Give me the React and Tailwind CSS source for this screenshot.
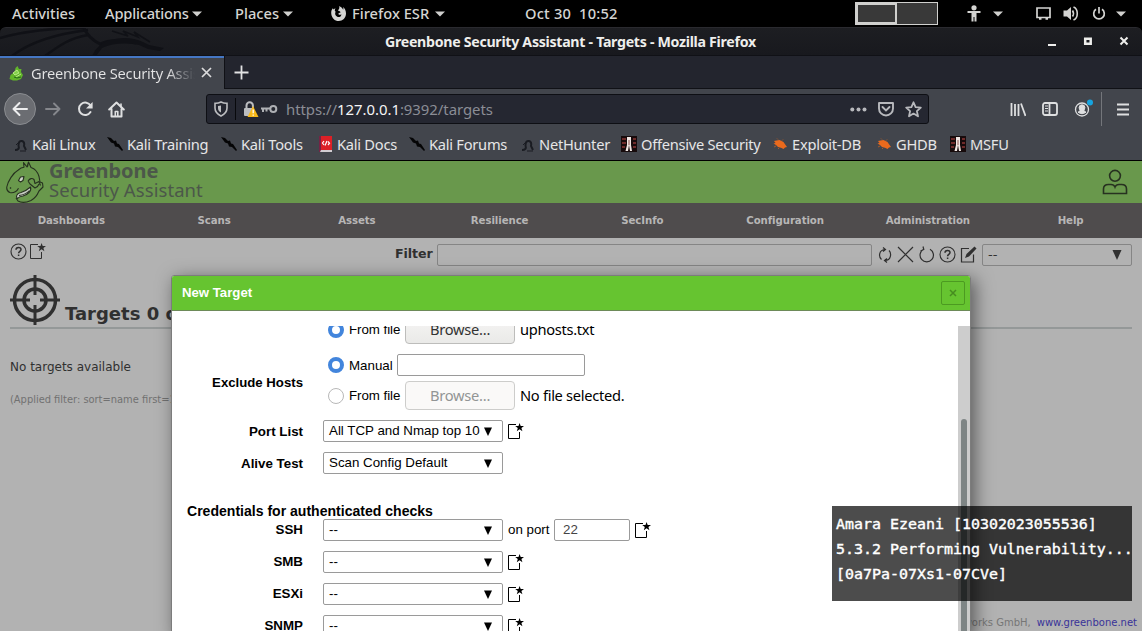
import React from "react";

const Caret = () => (
  <svg width="12" height="6" viewBox="0 0 12 6" fill="#d0d0ce"><path d="M1 0.5h10L6 5.5z" /></svg>
);

const NewIcon = ({ color = "#000" }) => (
  <svg width="16" height="16" viewBox="0 0 16 16" className="shrink-0">
    <path d="M8 1.500H.5v14H11.500V9" fill="none" stroke={color} strokeWidth="1" />
    <path d="M11.600 0l1.100 3h3.300l-2.600 2 1 3.200-2.800-1.900L8.800 8.200l1-3.200L7.200 3h3.300z" fill={color} />
  </svg>
);

const HelpIcon = () => (
  <svg width="17" height="17" viewBox="0 0 17 17" fill="none" stroke="#303030" className="shrink-0">
    <circle cx="8.500" cy="8.500" r="7.500" strokeWidth="1.100" />
    <path d="M6 6.700c0-3 5-3 5-.2 0 1.900-2.400 1.800-2.400 3.700M8.600 11.500v1.600" strokeWidth="1.500" />
  </svg>
);

function MenuBar() {
  return (
    <div className="flex h-[27px] shrink-0 items-center bg-black pl-3 text-[14.670px] font-medium text-[#d4d4d2]">
      <span className="w-[93px] pb-[2px]">Activities</span>
      <span className="w-[86px] pb-[2px] tracking-[-0.2px]">Applications</span>
      <span className="w-11"><Caret /></span>
      <span className="w-[47px] pb-[2px]">Places</span>
      <span className="w-[49px]"><Caret /></span>
      <svg width="15" height="15" viewBox="0 0 16 16" className="mr-[6px]">
        <path d="M2 2.500C.5 4 0 6 .3 8.400.9 12.800 4 16 8.200 16c4.300 0 7.800-3.300 7.800-8 0-3-1.300-5.600-3-7C13.500 3 13 4 13 4 11.500 1.200 9.500.5 8.500 0c1.200 2.500-.5 3.600-1 5 2 .3 2.800 1 2.600 2-1 .3-2 .6-2.200 1.300 0 1.300 2 1.500 3.200.4C11 11.500 8.500 12.300 6.700 11.400 4.400 10.300 3.800 7.800 5 6 3.500 5.200 4 3.500 4.800 2.600 3.700 2.600 3 3.300 2.700 3.700z" fill="#d4d4d2" />
      </svg>
      <span className="w-[82px] pb-[2px]">Firefox ESR</span>
      <span className="w-[91px]"><Caret /></span>
      <span className="w-[330px] whitespace-pre pb-[2px] tracking-[0.200px]">Oct 30  10:52</span>
      <div className="flex h-[23px] w-[83px] border border-[#d0d0ce] bg-[#393939]">
        <div className="w-[41px] border-2 border-[#d0d0ce]" />
      </div>
      <svg width="14" height="17" viewBox="0 0 14 17" className="ml-[29px]" fill="#d4d4d2">
        <circle cx="7" cy="2.800" r="2.600" /><path d="M.5 6h13v2H9.500v8.500h-2V12h-1v4.500h-2V8H.5z" />
      </svg>
      <span className="ml-[11px] w-11"><Caret /></span>
      <svg width="15" height="13" viewBox="0 0 15 13" fill="none" stroke="#d4d4d2" strokeWidth="1.700"><path d="M1 1h13v9.500H1zM3 12h2.500M9.500 12H12" /></svg>
      <svg width="17" height="15" viewBox="0 0 17 15" className="ml-[12px]" fill="#d4d4d2">
        <path d="M0.500 4.500h3.500L8 1v13L4 10.500H0.500z" />
        <path d="M9.500 4.500q2 3 0 6M10.500 1c5 2 5 11 0 13" fill="none" stroke="#d4d4d2" strokeWidth="1.600" />
      </svg>
      <svg width="14" height="14" viewBox="0 0 14 14" className="ml-3" fill="none" stroke="#d4d4d2" strokeWidth="1.700"><path d="M7 0v6.500M4 2.300a5.300 5.300 0 1 0 6 0" /></svg>
      <span className="ml-[9px]"><Caret /></span>
    </div>
  );
}

function TitleBar() {
  return (
    <div className="flex h-7 shrink-0 items-center overflow-hidden rounded-t-md border-t border-[#2a2a2f] bg-gradient-to-b from-[#1d1e22] to-[#18191e]">
      <svg width="385" height="28" viewBox="0 0 385 28" fill="none" stroke="#101116" className="shrink-0">
        <path d="M0 10C25 3 55 0 84 0M12 28C30 14 55 6 88 2M45 28C60 17 70 10 88 7" strokeWidth="2.500" />
        <path d="M84 0Q88 10 100 16Q112 10 136 15" strokeWidth="3" />
        <path d="M92 28Q98 15 110 12Q128 7 143 14L149 17 164 20 160 23 148 21 139 17Q118 13 102 20L96 28z" fill="#101116" stroke="none" />
        <path d="M112 3L128 8 123 3 138 9 134 4 150 14" strokeWidth="1.500" />
      </svg>
      <span className="w-[660px] shrink-0 text-[14.200px] font-bold tracking-[-0.300px] text-[#eeeeec]">Greenbone Security Assistant - Targets - Mozilla Firefox</span>
      <svg width="82" height="12" viewBox="0 0 82 12" className="ml-[2px] shrink-0" fill="none" stroke="#eeeeec" strokeWidth="2">
        <path d="M1 9h8M73.500 1.500l7 7M80.500 1.500l-7 7" /><path d="M38.200 2.700h5.500v5h-5.500z" strokeWidth="2.500" />
      </svg>
    </div>
  );
}

function Tabs() {
  return (
    <div className="flex h-[34px] shrink-0 border-t border-[#101116] bg-[#23252e]">
      <div className="flex w-[224px] items-center border-t-2 border-[#4577c4] bg-[#42454c] pb-[2px] pl-[9px]">
        <svg width="16" height="16" viewBox="0 0 16 16">
          <path d="M0.500 14l1-4 4-3 1-4 2-2 1.500 3 2.500 0-.5 3 2 3-2 4-4 1.500H4z" fill="#62b52b" />
          <path d="M4 8l4-3 2 3-4 2zM7 12l5-3" stroke="#b8e986" fill="#83d14b" /><path d="M5 12l3 1 4-1" stroke="#246918" fill="none" />
        </svg>
        <span className="ml-[6px] w-[164px] overflow-hidden whitespace-nowrap bg-gradient-to-r from-[#e4e4e5] from-[83%] to-transparent to-100% bg-clip-text text-[14.670px] tracking-[-0.230px] text-transparent">Greenbone Security Assistant</span>
        <svg width="11" height="11" viewBox="0 0 11 11" className="ml-[6px]" stroke="#dcdcdd" strokeWidth="1.700"><path d="M1 1l9 9M10 1l-9 9" /></svg>
      </div>
      <div className="flex flex-1 items-center border-b border-l border-[#101116] pl-[9px]">
        <svg width="15" height="15" viewBox="0 0 15 15" stroke="#e2e2e3" strokeWidth="1.800"><path d="M7.500 0.500v14M.5 7.500h14" /></svg>
      </div>
    </div>
  );
}

function NavBar() {
  return (
    <div className="flex h-10 shrink-0 items-center bg-[#42454c] pl-1">
      <div className="flex h-8 w-8 items-center justify-center rounded-full border border-[#8a8c90] bg-[#6b6d72]">
        <svg width="16" height="16" viewBox="0 0 16 16" fill="none" stroke="#ededee" strokeWidth="2" strokeLinecap="round" strokeLinejoin="round"><path d="M15 8H1.500M7.500 2l-6 6 6 6" /></svg>
      </div>
      <svg width="16" height="16" viewBox="0 0 16 16" className="ml-[9px]" fill="none" stroke="#85878c" strokeWidth="1.900" strokeLinecap="round" strokeLinejoin="round"><path d="M1 8h13.500M9 2.500L14.500 8 9 13.500" /></svg>
      <svg width="16" height="16" viewBox="0 0 16 16" className="ml-4" fill="none" stroke="#dedfe0" strokeWidth="2"><path d="M13.600 4.700A6.200 6.200 0 1 0 13.500 11" strokeLinecap="round" /><path d="M15.600 1v6.600H9z" fill="#dedfe0" stroke="none" /></svg>
      <svg width="17" height="17" viewBox="0 0 17 17" className="ml-[15px]" fill="none" stroke="#dedfe0" strokeWidth="2" strokeLinecap="round" strokeLinejoin="round"><path d="M1.200 8.500L8.500 1.500 15.800 8.500M3.500 8v7.500h10V8" /><path d="M7.300 15V10.500h2.500V15M13 3v3" strokeWidth="1.600" /></svg>
      <div className="ml-[81px] flex h-[30px] w-[723px] items-center rounded-[3px] border border-[#0e0f14] bg-[#252731]">
        <svg width="14" height="16" viewBox="0 0 14 16" className="ml-[7px]" fill="none" stroke="#bcbdc0" strokeWidth="1.600"><path d="M7 1Q10 2.500 13 2.300V7q0 5-6 8Q1 12 1 7V2.300Q4 2.500 7 1z" /><path d="M7 4.500v7Q4 10 4 7V5z" fill="#bcbdc0" stroke="none" /></svg>
        <div className="ml-[7px] h-[22px] w-px bg-[#08090c]" />
        <svg width="16" height="17" viewBox="0 0 16 17" className="ml-[7px]">
          <path d="M3.500 8V4.500a3.200 3.200 0 0 1 6.400 0V8" fill="none" stroke="#bcbdc0" strokeWidth="2" /><rect x="1" y="7" width="10" height="8" rx="1" fill="#bcbdc0" />
          <path d="M10 5L15.500 16H4.500z" fill="#f8b91a" /><path d="M10.200 8.500v3.800M10.200 13.500v1.300" stroke="#fff" strokeWidth="1.300" />
        </svg>
        <svg width="17" height="10" viewBox="0 0 17 10" className="ml-[2px]" fill="none" stroke="#aeb0b4" strokeWidth="2"><circle cx="12.300" cy="5" r="3" /><path d="M9 4.500H0M2 5v3M5.500 5v2.500" /></svg>
        <span className="ml-[8px] w-[564px] text-[14.900px] tracking-[-0.030px] text-[#8b8d95]">https://<span className="text-[#f4f4f5]">127.0.0.1</span>:9392/targets</span>
        <svg width="17" height="5" viewBox="0 0 17 5" fill="#b8b9bd"><circle cx="2.300" cy="2.500" r="2" /><circle cx="8.500" cy="2.500" r="2" /><circle cx="14.500" cy="2.500" r="2" /></svg>
        <svg width="16" height="15" viewBox="0 0 16 15" className="ml-[11px]" fill="none" stroke="#b8b9bd" strokeWidth="1.900"><path d="M1 1h14v5.500a7 7 0 0 1-14 0z" strokeLinejoin="round" /><path d="M4.500 5L8 8.500 11.500 5" strokeLinecap="round" /></svg>
        <svg width="17" height="17" viewBox="0 0 17 17" className="ml-[11px]" fill="none" stroke="#b8b9bd" strokeWidth="1.800" strokeLinejoin="round"><path d="M8.500 1.300l2.100 4.800 5.200.5-3.900 3.500 1.100 5.200-4.500-2.700L4 15.300l1.100-5.200L1.200 6.600l5.200-.5z" /></svg>
      </div>
      <svg width="16" height="15" viewBox="0 0 16 15" className="ml-[81px]" fill="none" stroke="#dedfe0" strokeWidth="1.800"><path d="M1.500 1v13M5 2v12M8.500 2v12M11 1.500L15.500 14" /></svg>
      <svg width="16" height="14" viewBox="0 0 16 14" className="ml-4" fill="none" stroke="#dedfe0" strokeWidth="1.800"><rect x="1" y="1" width="14" height="12" rx="2" /><path d="M7.500 1v12" /><path d="M3 4h3M3 6.500h3M3 9h3" strokeWidth="1" /></svg>
      <svg width="20" height="20" viewBox="0 0 20 20" className="ml-4" fill="none" stroke="#dedfe0"><circle cx="8" cy="10.500" r="6.500" strokeWidth="1.300" /><circle cx="8" cy="8.700" r="2.900" fill="#dedfe0" /><path d="M4 13.300q4-4.500 8 0-4 3-8 0z" fill="#dedfe0" /><circle cx="16" cy="3.500" r="3" fill="#16a4e0" stroke="none" /></svg>
      <div className="ml-[7px] h-[34px] w-px bg-[#74767b]" />
      <svg width="14" height="13" viewBox="0 0 14 13" className="ml-[14px]" stroke="#dedfe0" strokeWidth="2"><path d="M1 1.500h12M1 6.500h12M1 11.500h12" /></svg>
    </div>
  );
}

const Dragon = () => <svg width="16" height="16" viewBox="0 0 16 16" fill="none" stroke="#1a1c22"><path d="M3 14Q8 14 6.500 9.500q0-5 3.500-4.500 3 1 2 5l2 4" strokeWidth="2" /><path d="M4 9L8 5M8 15h6" strokeWidth="1" /></svg>;
const Knife = () => <svg width="16" height="16" viewBox="0 0 16 16" fill="#050506"><path d="M0 1l4 1 3 3 2-.5 1 3 2 .5 4 6-1 1-4-4-3-.5-1-3-3-1z" /></svg>;
const Doc = () => <svg width="13" height="16" viewBox="0 0 13 16"><rect width="13" height="14" fill="#dc2026" /><path d="M0 0h2v16H0z" fill="#762345" /><path d="M2 14h11v2H1z" fill="#d2cdd2" /><path d="M5 5L3.500 7l1.500 2M9 5.500l1.500 1.700L9 9M8 5L6 9.500" stroke="#fff" fill="none" strokeWidth="1.200" /></svg>;
const OffSec = () => <svg width="16" height="16" viewBox="0 0 16 16"><path d="M0 0h16v16H0z" fill="#170b0c" /><path d="M1 3h4M1 7h4M1 11h3M12 3h3M12 7h3M12 11h3" stroke="#6e2a2a" strokeWidth="2" /><path d="M6 1h4v8l1 6H9L8 9l-1 6H4.500L6 9z" fill="#f1e7e4" /><path d="M7.500 4h1v5h-1z" fill="#8a5550" /></svg>;
const Bug = () => <svg width="15" height="12" viewBox="0 0 15 12"><path d="M1 3l2.500-.5L6.500 2l4 2 1 1.500 2.500 3.500-2 .5-1.500 1.500L8 9.800 5 9 3 7 .5 5.500l2-.5z" fill="#ea6a1d" /><path d="M5 1.500l-1-1M9 2.500l1-1M3 8l-2 1M6 10l-1 1" stroke="#a65a2b" /></svg>;

const bookmarks = [
  { icon: Dragon, label: "Kali Linux", cls: "w-[95px]" },
  { icon: Knife, label: "Kali Training", cls: "w-[114px]" },
  { icon: Knife, label: "Kali Tools", cls: "w-[96px]" },
  { icon: Doc, label: "Kali Docs", cls: "w-[92px]" },
  { icon: Knife, label: "Kali Forums", cls: "w-[110px]" },
  { icon: Dragon, label: "NetHunter", cls: "w-[102px]" },
  { icon: OffSec, label: "Offensive Security", cls: "w-[151px]" },
  { icon: Bug, label: "Exploit-DB", cls: "w-[104px]" },
  { icon: Bug, label: "GHDB", cls: "w-[74px]" },
  { icon: OffSec, label: "MSFU", cls: "w-[70px]" },
];

function Bookmarks() {
  return (
    <div className="flex h-[32px] shrink-0 items-center border-b border-black bg-[#42454c] pb-px pl-3 text-[14.670px] tracking-[-0.260px] text-[#e6e6e7]">
      {bookmarks.map(({ icon: Icon, label, cls }) => (
        <div key={label} className={"flex shrink-0 items-center whitespace-nowrap " + cls}>
          <span className="flex w-5 shrink-0 justify-center pr-1"><Icon /></span><span className="pb-px">{label}</span>
        </div>
      ))}
    </div>
  );
}

const sections = ["Dashboards", "Scans", "Assets", "Resilience", "SecInfo", "Configuration", "Administration", "Help"];

function Header() {
  return (
    <>
      <div className="flex h-[42px] shrink-0 items-center bg-[#69984c] pl-[6px]">
        <svg width="38" height="42" viewBox="0 0 38 42" fill="none" stroke="#26311f" strokeWidth="1.100" strokeLinejoin="round">
          <path d="M.8 26C2 20 7 12 12.300 9Q15 6.500 18 6.300L17.500 1.500l3.500 4.500L22.500 1l2.500 5.500Q31 8.500 33 15.500L34 21l2.500 1 .5 4-4 4Q30 37 25 39.500q-8 3.500-13 .5l-2-3M.8 26q-.5 4 3 5.500 3 .8 5.500-.8 2-1 3.200-3.500" />
          <path d="M12.500 19.500l2-3.500 3.500-.5-1 4-2.500 1.500z" fill="#cfd4cc" />
          <path d="M10.500 36q0-3.500 4.500-4.500 5-1.500 9.500-5.500 1 3-1.500 5.500-3 3-6 3.500-4 .5-5.500 2.500z" fill="#c8ccc4" />
          <path d="M22 20q3-4 6-1.500l1 4 4-2 1.500 4M22 20l2 3 5 4q3-1 4-4M22 3.500L21.500 6M13 34.500q7-1 10.500-5" />
          <path d="M4 27.500l1-1" strokeWidth="1.500" />
        </svg>
        <div className="mb-[3px] ml-[5px] flex w-[1053px] flex-col text-[#4c574a]">
          <span className="h-[18px] text-[20px] leading-[18px] font-bold tracking-[-0.080px]">Greenbone</span>
          <span className="h-[19px] text-[18.500px] leading-[19px] tracking-[0.070px]">Security Assistant</span>
        </div>
        <svg width="26" height="26" viewBox="0 0 26 26" fill="none" stroke="#273120" strokeWidth="1.600"><circle cx="13" cy="6.800" r="5.400" /><path d="M1.500 24.500V20q0-4.500 5-4.500h2.500q3 0 4 2.500 1-2.500 4-2.500h2.500q5 0 5 4.500v4.500z" /></svg>
      </div>
      <div className="grid h-[35px] shrink-0 grid-cols-8 items-center bg-[#4f4c4d] text-center font-[DejaVu_Sans] text-[10.200px] font-bold tracking-[-0.080px] text-[#b7b6b6]">
        {sections.map((s) => <span key={s}>{s}</span>)}
      </div>
    </>
  );
}

function TargetsPage() {
  return (
    <div className="flex flex-1 flex-col bg-[#b2b2b2] px-[10px] font-[DejaVu_Sans] text-[#303030]">
      <div className="flex h-[33px] items-center">
        <div className="flex w-[385px] gap-[3px] self-start pt-[5px]"><HelpIcon /><NewIcon color="#303030" /></div>
        <span className="w-[42px] text-[12.600px] font-bold tracking-[-0.050px]">Filter</span>
        <div className="h-[22px] w-[435px] rounded-[2px] border border-[#858585]" />
        <div className="flex items-center gap-[4px] pl-[5px]">
          <svg width="16" height="16" viewBox="0 0 16 16" fill="none" stroke="#303030" strokeWidth="1.200"><path d="M8.500 2.500C1.500 2.500 1.500 10 4.500 12.500M8 13.500c6.500 0 6.500-7.500 4-10M6 .5l2.500 2L6 4.500M10 11.500l-2.500 2 2.500 2" /></svg>
          <svg width="17" height="17" viewBox="0 0 17 17" stroke="#303030" strokeWidth="1.200"><path d="M1 1l15 15M16 1L1 16" /></svg>
          <svg width="17" height="17" viewBox="0 0 17 17" fill="none" stroke="#303030" strokeWidth="1.200"><path d="M5.500 3.300A6.700 6.700 0 1 0 12 3.300M5 .5l.8 3L2.500 5" /></svg>
          <HelpIcon />
          <svg width="17" height="17" viewBox="0 0 17 17" fill="none" stroke="#303030" strokeWidth="1.200"><path d="M9 2.500H1.500v13.500h12V8.500" /><path d="M5 12l1.500-4L14.500.500l2 2L9 10.500z" fill="#303030" stroke="none" /></svg>
        </div>
        <div className="ml-[5px] flex h-[22px] w-[150px] items-center justify-between rounded-[2px] border border-[#858585] px-[5px] text-[13px]"><span>--</span><svg width="18" height="10" viewBox="0 0 18 10" fill="#303030"><path d="M4.500 0h9L9 10z" /></svg></div>
      </div>
      <div className="flex h-[58px] items-end border-b-2 border-[#949898]">
        <svg width="50" height="50" viewBox="0 0 50 50" className="mb-[2px]" fill="none" stroke="#303030"><circle cx="25" cy="25" r="20.500" strokeWidth="3.500" /><circle cx="25" cy="25" r="11" strokeWidth="3.500" /><path d="M25 0v20M25 30v20M0 25h20M30 25h20" strokeWidth="3" /></svg>
        <span className="ml-[5px] whitespace-nowrap text-[18px] leading-[26px] font-bold">Targets 0 of 0</span>
      </div>
      <div className="pt-[29px] text-[12px] leading-[18px]">No targets available</div>
      <div className="pt-[16px] text-[9.900px] leading-[15px] text-[#717171]">(Applied filter: sort=name first=1 rows=10)</div>
      <div className="mt-auto flex justify-end gap-[6px] pb-px text-[10px] leading-[14px] text-[#767676]">
        <span>Copyright (C) 2009-2021 by Greenbone Networks GmbH,</span><span className="-mr-[5px] text-[#393399]">www.greenbone.net</span>
      </div>
    </div>
  );
}

const Radio = ({ on }) => <span className={on ? "mr-[5px] h-4 w-4 shrink-0 rounded-full border-4 border-[#4285dc] bg-white" : "mr-[5px] h-4 w-4 shrink-0 rounded-full border border-[#b8b8b8] bg-white"} />;

const Select = ({ value }) => (
  <div className="flex h-[22px] w-[180px] shrink-0 items-center justify-between rounded-[2px] border border-[#9a9a9a] bg-white pr-[10px] pl-[5px]">
    <span>{value}</span><svg width="8" height="9" viewBox="0 0 8 9"><path d="M0 .5h8L4 9z" /></svg>
  </div>
);

const Row = ({ label, labelStyle = "", children }) => (
  <div className="mb-[10px] flex h-[22px] shrink-0 items-center">
    <span className={"mr-5 w-[131px] text-right font-bold " + labelStyle}>{label}</span>{children}
  </div>
);

const FileRow = ({ on, name, buttonStyle }) => (
  <div className="flex h-[29px] items-center">
    <Radio on={on} /><span className="w-14 tracking-[-0.050px]">From file</span>
    <span className={"flex h-[29px] w-[110px] items-center justify-center rounded border pb-[2px] font-[Noto_Sans] text-[14.670px] tracking-[-0.250px] " + buttonStyle}>Browse...</span>
    <span className="ml-[5px] pb-[2px] font-[Noto_Sans] text-[14.670px] tracking-[-0.300px]">{name}</span>
  </div>
);

function Dialog() {
  return (
    <div className="absolute top-[275px] left-[171px] flex h-[360px] w-[800px] flex-col rounded-t-[3px] border border-[#7c7c7c] bg-white font-[Liberation_Sans] text-[13.330px] text-black shadow-[4px_4px_18px_rgba(0,0,0,0.5)]">
      <div className="flex h-[35px] shrink-0 items-center justify-between rounded-t-[2px] border-b border-[#6d8a59] bg-[#66c430] pr-[5px] pl-[10px] font-bold text-white">
        <span className="text-[13.200px]">New Target</span>
        <span className="flex h-6 w-6 items-center justify-center rounded-[2px] border border-[#4c9a21]"><svg width="8" height="8" viewBox="0 0 8 8" stroke="#468c20" strokeWidth="1.500"><path d="M1 1l6 6M7 1L1 7" /></svg></span>
      </div>
      <div className="mt-[15px] flex h-[310px] overflow-hidden">
        <div className="flex flex-1 flex-col">
          <div className="-mt-[11px] mb-[10px] shrink-0 pl-[156px]">
            <FileRow on name="uphosts.txt" buttonStyle="border-[#bdbdbb] bg-gradient-to-b from-[#f6f5f4] to-[#eaeae8] text-[#333]" />
          </div>
          <div className="mb-[10px] flex shrink-0 items-center">
            <span className="mr-[25px] w-[131px] pt-[2px] text-right text-[13.200px] font-bold">Exclude Hosts</span>
            <div className="flex flex-col gap-[5px]">
              <div className="flex h-[22px] items-center"><Radio on /><span className="w-12 pt-[2px]">Manual</span><div className="h-[22px] w-[188px] rounded-[2px] border border-[#9a9a9a]" /></div>
              <FileRow name="No file selected." buttonStyle="border-[#cdcdcb] bg-[#faf9f8] text-[#929595]" />
            </div>
          </div>
          <Row label="Port List" labelStyle="pt-[2px]"><Select value="All TCP and Nmap top 10" /><span className="ml-[5px]"><NewIcon /></span></Row>
          <Row label="Alive Test" labelStyle="pt-[2px]"><Select value="Scan Config Default" /></Row>
          <h2 className="mt-[19px] h-4 shrink-0 pl-[15px] text-[14.050px] leading-4 font-bold">Credentials for authenticated checks</h2>
          <Row label="SSH">
            <Select value="--" /><span className="ml-[5px] w-[46px] whitespace-nowrap">on port</span>
            <div className="flex h-[22px] w-[76px] items-center rounded-[2px] border border-[#9a9a9a] pl-2 text-[#444]">22</div><span className="ml-[5px]"><NewIcon /></span>
          </Row>
          {["SMB", "ESXi", "SNMP"].map((l) => <Row key={l} label={l}><Select value="--" /><span className="ml-[5px]"><NewIcon /></span></Row>)}
        </div>
        <div className="flex w-3 justify-center bg-[#cdcdcd] pt-[93px]"><div className="w-[6px] rounded-t-[3px] bg-[#7e8585]" /></div>
      </div>
    </div>
  );
}

export default function App() {
  return (
    <div className="relative flex h-[631px] w-[1142px] flex-col overflow-hidden bg-black font-[Noto_Sans]">
      <MenuBar />
      <TitleBar />
      <Tabs />
      <NavBar />
      <Bookmarks />
      <Header />
      <TargetsPage />
      <Dialog />
      <div className="absolute top-[506px] left-[832px] flex h-[95px] w-[300px] flex-col bg-black/70 pt-[6px] pl-1 font-[DejaVu_Sans_Mono] text-[14.950px] leading-[25px] whitespace-nowrap text-white [-webkit-text-stroke:0.400px_white]">
        <span>Amara Ezeani [10302023055536]</span>
        <span>5.3.2 Performing Vulnerability...</span>
        <span>[0a7Pa-07Xs1-07CVe]</span>
      </div>
    </div>
  );
}
